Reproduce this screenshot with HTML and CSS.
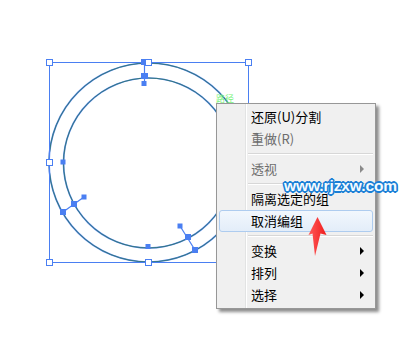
FILE: index.html
```html
<!DOCTYPE html>
<html>
<head>
<meta charset="utf-8">
<link rel="stylesheet" href="styles.css">
</head>
<body>
<div class="stage">
  <svg class="art" width="405" height="356" viewBox="0 0 405 356">
    <g fill="none">
      <circle cx="148.5" cy="162.5" r="99.5" stroke="#5a88ee" stroke-width="1.7"/>
      <circle cx="148.5" cy="162.5" r="99.5" stroke="#22704a" stroke-width="0.7"/>
      <circle cx="148.5" cy="163" r="85" stroke="#5a88ee" stroke-width="1.7"/>
      <circle cx="148.5" cy="163" r="85" stroke="#22704a" stroke-width="0.7"/>
      <rect x="49.5" y="62.5" width="199" height="200" stroke="#4a7ff2" stroke-width="1"/>
      <line x1="144.5" y1="62" x2="144.5" y2="84" stroke="#4a7ff2" stroke-width="1.2"/>
      <line x1="63" y1="212" x2="84" y2="197" stroke="#4a7ff2" stroke-width="1.2"/>
      <line x1="180" y1="226" x2="195" y2="250" stroke="#4a7ff2" stroke-width="1.2"/>
    </g>
    <g fill="#4a7ff2">
      <rect x="141" y="59" width="6" height="6"/>
      <rect x="141" y="73" width="7" height="6"/>
      <rect x="141.5" y="81" width="5" height="5"/>
      <rect x="60.5" y="159.5" width="5" height="5"/>
      <rect x="145.5" y="244" width="5" height="5"/>
      <rect x="60" y="209" width="6" height="6"/>
      <rect x="71" y="201" width="6" height="6"/>
      <rect x="81.5" y="194.5" width="5" height="5"/>
      <rect x="177.5" y="223.5" width="5" height="5"/>
      <rect x="185" y="234" width="6" height="6"/>
      <rect x="192" y="247" width="6" height="6"/>
    </g>
    <g fill="#fff" stroke="#4a7ff2" stroke-width="1">
      <rect x="46.5" y="59.5" width="6" height="6"/>
      <rect x="145.5" y="59.5" width="6" height="6"/>
      <rect x="245.5" y="59.5" width="6" height="6"/>
      <rect x="46.5" y="159.5" width="6" height="6"/>
      <rect x="46.5" y="259.5" width="6" height="6"/>
      <rect x="145.5" y="259.5" width="6" height="6"/>
    </g>
    <text x="216" y="101.5" class="pathlabel">路径</text>
  </svg>

  <div class="menu">
    <div class="item">还原(U)分割</div>
    <div class="item disabled">重做(R)</div>
    <div class="sep"></div>
    <div class="item disabled sub">透视</div>
    <div class="sep"></div>
    <div class="item">隔离选定的组</div>
    <div class="item hover">取消编组</div>
    <div class="sep"></div>
    <div class="item sub">变换</div>
    <div class="item sub">排列</div>
    <div class="item sub">选择</div>
  </div>

  <div class="watermark">www.rjzxw.com</div>

  <svg class="redarrow" width="405" height="356" viewBox="0 0 405 356">
    <defs>
      <linearGradient id="rg" x1="0" y1="0" x2="1" y2="0">
        <stop offset="0" stop-color="#ff5a5a"/>
        <stop offset="1" stop-color="#f01c1c"/>
      </linearGradient>
    </defs>
    <polygon points="317.5,217 326.5,235 320.5,233.5 315,256 312.5,233.5 308.5,235" fill="url(#rg)"/>
  </svg>
</div>
</body>
</html>
```
FILE: styles.css
```css
html, body {
  margin: 0;
  padding: 0;
  background: #fff;
}
.stage {
  position: relative;
  width: 405px;
  height: 356px;
  overflow: hidden;
  font-family: "Noto Sans CJK SC", "DejaVu Sans", sans-serif;
}
.art {
  display: block;
}
.pathlabel {
  font-family: "Noto Sans CJK SC", sans-serif;
  font-size: 9px;
  fill: #7cf27c;
}
.menu {
  position: absolute;
  left: 216px;
  top: 103px;
  width: 158px;
  padding: 2px 0;
  background: #f0f0f0;
  border: 1px solid #979797;
  box-shadow: 3px 3px 3px rgba(0, 0, 0, 0.45);
  background-image: linear-gradient(to right, transparent 28px, #e2e3e3 28px, #e2e3e3 29px, #ffffff 29px, #ffffff 30px, transparent 30px);
}
.item {
  position: relative;
  height: 19px;
  line-height: 19px;
  padding-bottom: 1px;
  margin: 0 2px;
  padding-left: 31px;
  border: 1px solid transparent;
  border-radius: 3px;
  font-size: 13px;
  color: #000;
  white-space: nowrap;
}
.item.disabled {
  color: #6d6d6d;
}
.item.hover {
  border-color: #aeccef;
  background: linear-gradient(#f2f7fd, #e3edf9);
}
.item.sub::after {
  content: "";
  position: absolute;
  right: 8px;
  top: 6px;
  border-left: 4px solid #000;
  border-top: 4px solid transparent;
  border-bottom: 4px solid transparent;
}
.item.disabled.sub::after {
  border-left-color: #8a8a8a;
}
.sep {
  height: 8px;
  margin-left: 31px;
  margin-right: 2px;
  background: linear-gradient(to bottom, transparent 3px, #d7d7d7 3px, #d7d7d7 4px, #ffffff 4px, #ffffff 5px, transparent 5px);
}
.watermark {
  position: absolute;
  left: 284px;
  top: 176px;
  font-family: "Liberation Sans", Arial, sans-serif;
  font-weight: bold;
  font-size: 15.5px;
  line-height: 20px;
  letter-spacing: -0.1px;
  color: #f4fbff;
  text-shadow:
    1.6px 0 0 #1a7fd6, -1.6px 0 0 #1a7fd6, 0 1.6px 0 #1a7fd6, 0 -1.6px 0 #1a7fd6,
    1.2px 1.2px 0 #1a7fd6, -1.2px 1.2px 0 #1a7fd6, 1.2px -1.2px 0 #1a7fd6, -1.2px -1.2px 0 #1a7fd6,
    0 0 2px #1a7fd6;
}
.redarrow {
  position: absolute;
  left: 0;
  top: 0;
  pointer-events: none;
}
```
